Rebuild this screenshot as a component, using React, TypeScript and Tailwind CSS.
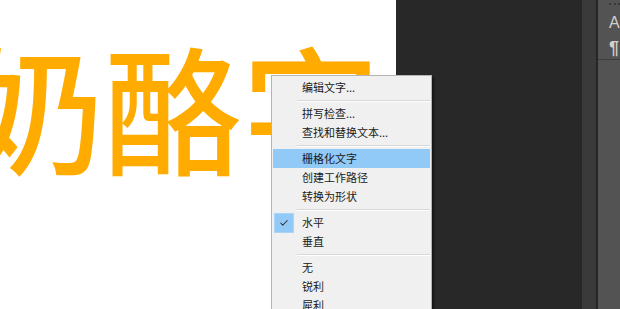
import { Check } from "lucide-react";

type Item = { label: string; sep?: false; active?: boolean; checked?: boolean } | { sep: true };

const items: Item[] = [
  { label: "编辑文字..." },
  { sep: true },
  { label: "拼写检查..." },
  { label: "查找和替换文本..." },
  { sep: true },
  { label: "栅格化文字", active: true },
  { label: "创建工作路径" },
  { label: "转换为形状" },
  { sep: true },
  { label: "水平", checked: true },
  { label: "垂直" },
  { sep: true },
  { label: "无" },
  { label: "锐利" },
  { label: "犀利" },
];

const cjk = { fontFamily: '"Noto Sans CJK SC", "Microsoft YaHei", sans-serif' };

function ContextMenu() {
  return (
    <div
      className="absolute left-[271px] top-[75px] w-[161px] bg-[#f0f0f0] border border-[#b4b4b4] pt-[2px] pb-1 shadow-[2px_2px_2px_rgba(0,0,0,0.45)]"
      style={cjk}
    >
      {items.map((it, i) =>
        it.sep ? (
          <div key={i} className="h-[7px] flex items-center pl-[25px] pr-[1px]">
            <div className="w-full border-t border-[#d7d7d7] border-b border-b-white" />
          </div>
        ) : (
          <div
            key={i}
            className={
              "relative h-[19px] mx-[1px] flex items-center pl-[28px] text-[11px] text-[#1a1a1a] leading-none border " +
              (it.active ? "bg-[#91c9f7] border-[#91c9f7]" : "border-transparent")
            }
          >
            {it.checked && (
              <span className="absolute left-0 top-[-1px] w-[20px] h-[20px] bg-[#91c9f7] border border-[#a8d4f8] flex items-center justify-center">
                <Check className="w-[10px] h-[10px] text-[#333]" strokeWidth={2.5} />
              </span>
            )}
            {it.label}
          </div>
        )
      )}
    </div>
  );
}

export default function App() {
  return (
    <div className="relative flex w-[620px] h-[309px] overflow-hidden bg-[#282828]">
      <div className="w-[396px] h-full bg-white overflow-hidden shrink-0">
        <div
          className="ml-[-34px] mt-[35px] whitespace-nowrap text-[138px] leading-none font-medium text-[#ffab00]"
          style={cjk}
        >
          奶酪字
        </div>
      </div>
      <div className="w-[186px] h-full bg-[#282828] shrink-0" />
      <div className="w-[14px] h-full bg-[#3a3a3a] shrink-0" />
      <div className="w-[2px] h-full bg-[#262626] shrink-0" />
      <div className="flex-1 h-full bg-[#535353] flex flex-col">
        <div className="h-[60px] border-b border-[#3e3e3e] pl-[11px] pt-[3px]" style={{ fontFamily: '"Liberation Sans", Arial, sans-serif' }}>
          <div className="h-[3px] w-full border-t-2 border-dotted border-[#3a3a3a]" />
          <div className="mt-[9px] text-[16px] leading-none text-[#cfcfcf]">A</div>
          <div className="mt-[8px] text-[18px] leading-none font-bold text-[#cfcfcf]">¶</div>
        </div>
      </div>
      <ContextMenu />
    </div>
  );
}
